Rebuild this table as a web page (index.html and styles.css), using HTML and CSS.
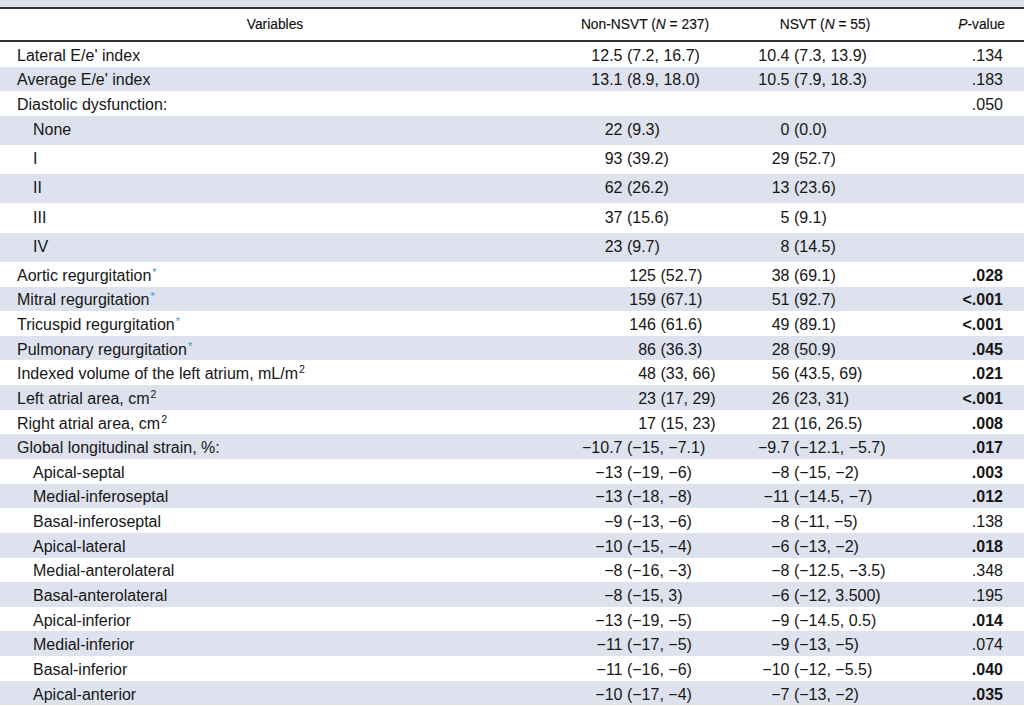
FILE: index.html
```html
<!DOCTYPE html>
<html lang="en">
<head>
<meta charset="utf-8">
<title>Echocardiographic variables</title>
<link rel="stylesheet" href="styles.css">
</head>
<body>
<div class="topband"></div>
<div class="table">
  <div class="row head">
    <div class="c0">Variables</div>
    <div class="c1">Non-NSVT (<i>N</i> = 237)</div>
    <div class="c2">NSVT (<i>N</i> = 55)</div>
    <div class="c3"><i>P</i>-value</div>
  </div>
  <div class="body">
    <div class="row"><div class="c0">Lateral E/e' index</div><div class="c1 v"><span class="n">12.5</span><span class="r">(7.2, 16.7)</span></div><div class="c2 v"><span class="n">10.4</span><span class="r">(7.3, 13.9)</span></div><div class="c3">.134</div></div>
    <div class="row"><div class="c0">Average E/e' index</div><div class="c1 v"><span class="n">13.1</span><span class="r">(8.9, 18.0)</span></div><div class="c2 v"><span class="n">10.5</span><span class="r">(7.9, 18.3)</span></div><div class="c3">.183</div></div>
    <div class="row"><div class="c0">Diastolic dysfunction:</div><div class="c1"></div><div class="c2"></div><div class="c3">.050</div></div>
    <div class="row sub tall"><div class="c0">None</div><div class="c1 v"><span class="n">22</span><span class="r">(9.3)</span></div><div class="c2 v"><span class="n">0</span><span class="r">(0.0)</span></div><div class="c3"></div></div>
    <div class="row sub tall"><div class="c0">I</div><div class="c1 v"><span class="n">93</span><span class="r">(39.2)</span></div><div class="c2 v"><span class="n">29</span><span class="r">(52.7)</span></div><div class="c3"></div></div>
    <div class="row sub tall"><div class="c0">II</div><div class="c1 v"><span class="n">62</span><span class="r">(26.2)</span></div><div class="c2 v"><span class="n">13</span><span class="r">(23.6)</span></div><div class="c3"></div></div>
    <div class="row sub tall"><div class="c0">III</div><div class="c1 v"><span class="n">37</span><span class="r">(15.6)</span></div><div class="c2 v"><span class="n">5</span><span class="r">(9.1)</span></div><div class="c3"></div></div>
    <div class="row sub tall"><div class="c0">IV</div><div class="c1 v"><span class="n">23</span><span class="r">(9.7)</span></div><div class="c2 v"><span class="n">8</span><span class="r">(14.5)</span></div><div class="c3"></div></div>
    <div class="row g2"><div class="c0">Aortic regurgitation<sup class="ast">*</sup></div><div class="c1 v"><span class="n">125</span><span class="r">(52.7)</span></div><div class="c2 v"><span class="n">38</span><span class="r">(69.1)</span></div><div class="c3 sig">.028</div></div>
    <div class="row g2"><div class="c0">Mitral regurgitation<sup class="ast">*</sup></div><div class="c1 v"><span class="n">159</span><span class="r">(67.1)</span></div><div class="c2 v"><span class="n">51</span><span class="r">(92.7)</span></div><div class="c3 sig">&lt;.001</div></div>
    <div class="row g2"><div class="c0">Tricuspid regurgitation<sup class="ast">*</sup></div><div class="c1 v"><span class="n">146</span><span class="r">(61.6)</span></div><div class="c2 v"><span class="n">49</span><span class="r">(89.1)</span></div><div class="c3 sig">&lt;.001</div></div>
    <div class="row g2"><div class="c0">Pulmonary regurgitation<sup class="ast">*</sup></div><div class="c1 v"><span class="n">86</span><span class="r">(36.3)</span></div><div class="c2 v"><span class="n">28</span><span class="r">(50.9)</span></div><div class="c3 sig">.045</div></div>
    <div class="row g2"><div class="c0">Indexed volume of the left atrium, mL/m<sup>2</sup></div><div class="c1 v"><span class="n">48</span><span class="r">(33, 66)</span></div><div class="c2 v"><span class="n">56</span><span class="r">(43.5, 69)</span></div><div class="c3 sig">.021</div></div>
    <div class="row g2"><div class="c0">Left atrial area, cm<sup>2</sup></div><div class="c1 v"><span class="n">23</span><span class="r">(17, 29)</span></div><div class="c2 v"><span class="n">26</span><span class="r">(23, 31)</span></div><div class="c3 sig">&lt;.001</div></div>
    <div class="row g2"><div class="c0">Right atrial area, cm<sup>2</sup></div><div class="c1 v"><span class="n">17</span><span class="r">(15, 23)</span></div><div class="c2 v"><span class="n">21</span><span class="r">(16, 26.5)</span></div><div class="c3 sig">.008</div></div>
    <div class="row"><div class="c0">Global longitudinal strain, %:</div><div class="c1 v"><span class="n">−10.7</span><span class="r">(−15, −7.1)</span></div><div class="c2 v"><span class="n">−9.7</span><span class="r">(−12.1, −5.7)</span></div><div class="c3 sig">.017</div></div>
    <div class="row sub"><div class="c0">Apical-septal</div><div class="c1 v"><span class="n">−13</span><span class="r">(−19, −6)</span></div><div class="c2 v"><span class="n">−8</span><span class="r">(−15, −2)</span></div><div class="c3 sig">.003</div></div>
    <div class="row sub"><div class="c0">Medial-inferoseptal</div><div class="c1 v"><span class="n">−13</span><span class="r">(−18, −8)</span></div><div class="c2 v"><span class="n">−11</span><span class="r">(−14.5, −7)</span></div><div class="c3 sig">.012</div></div>
    <div class="row sub"><div class="c0">Basal-inferoseptal</div><div class="c1 v"><span class="n">−9</span><span class="r">(−13, −6)</span></div><div class="c2 v"><span class="n">−8</span><span class="r">(−11, −5)</span></div><div class="c3">.138</div></div>
    <div class="row sub"><div class="c0">Apical-lateral</div><div class="c1 v"><span class="n">−10</span><span class="r">(−15, −4)</span></div><div class="c2 v"><span class="n">−6</span><span class="r">(−13, −2)</span></div><div class="c3 sig">.018</div></div>
    <div class="row sub"><div class="c0">Medial-anterolateral</div><div class="c1 v"><span class="n">−8</span><span class="r">(−16, −3)</span></div><div class="c2 v"><span class="n">−8</span><span class="r">(−12.5, −3.5)</span></div><div class="c3">.348</div></div>
    <div class="row sub"><div class="c0">Basal-anterolateral</div><div class="c1 v"><span class="n">−8</span><span class="r">(−15, 3)</span></div><div class="c2 v"><span class="n">−6</span><span class="r">(−12, 3.500)</span></div><div class="c3">.195</div></div>
    <div class="row sub"><div class="c0">Apical-inferior</div><div class="c1 v"><span class="n">−13</span><span class="r">(−19, −5)</span></div><div class="c2 v"><span class="n">−9</span><span class="r">(−14.5, 0.5)</span></div><div class="c3 sig">.014</div></div>
    <div class="row sub"><div class="c0">Medial-inferior</div><div class="c1 v"><span class="n">−11</span><span class="r">(−17, −5)</span></div><div class="c2 v"><span class="n">−9</span><span class="r">(−13, −5)</span></div><div class="c3">.074</div></div>
    <div class="row sub"><div class="c0">Basal-inferior</div><div class="c1 v"><span class="n">−11</span><span class="r">(−16, −6)</span></div><div class="c2 v"><span class="n">−10</span><span class="r">(−12, −5.5)</span></div><div class="c3 sig">.040</div></div>
    <div class="row sub"><div class="c0">Apical-anterior</div><div class="c1 v"><span class="n">−10</span><span class="r">(−17, −4)</span></div><div class="c2 v"><span class="n">−7</span><span class="r">(−13, −2)</span></div><div class="c3 sig">.035</div></div>
  </div>
</div>
</body>
</html>
```

FILE: styles.css
```css
* { box-sizing: border-box; }

html, body {
  margin: 0;
  padding: 0;
  background: #ffffff;
}

body {
  font-family: "Liberation Sans", Arial, Helvetica, sans-serif;
  color: #161616;
  overflow: hidden;
}

.topband {
  height: 7px;
  background: #dee2ee;
}

.table {
  border-top: 2px solid #333333;
}

.row {
  display: grid;
  grid-template-columns: 550px 190px 170px 1fr;
  align-items: center;
  height: 24.65px;
  padding-top: 3px;
  font-size: 16px;
  line-height: 18px;
  white-space: nowrap;
}

.head {
  height: 33px;
  padding-top: 1px;
  border-bottom: 2px solid #333333;
  font-size: 13.8px;
  color: #111111;
  -webkit-text-stroke: 0.15px #111111;
}

.head .c0,
.head .c1,
.head .c2 {
  text-align: center;
  padding-left: 0;
}

.head .c3 {
  padding-right: 19px;
}

.body .row:nth-child(even) {
  background: #dee2ee;
}

.c0 {
  padding-left: 17px;
}

.sub .c0 {
  padding-left: 33px;
}

.tall {
  height: 29.2px;
  padding-top: 0;
  padding-bottom: 1px;
}

.v {
  display: grid;
  grid-template-columns: 72.5px auto;
}

.c2.v {
  grid-template-columns: 49.5px auto;
}

.g2 .c1.v {
  grid-template-columns: 106px auto;
}

.v .n {
  text-align: right;
}

.v .r {
  padding-left: 4.45px;
}

.c3 {
  text-align: right;
  padding-right: 21px;
}

.sig {
  font-weight: 700;
}

sup {
  font-size: 0.66em;
  line-height: 0;
  vertical-align: 0.55em;
  margin-left: 1px;
}

sup.ast {
  color: #3a9fcc;
  font-size: 0.7em;
  vertical-align: 0.45em;
}
```
